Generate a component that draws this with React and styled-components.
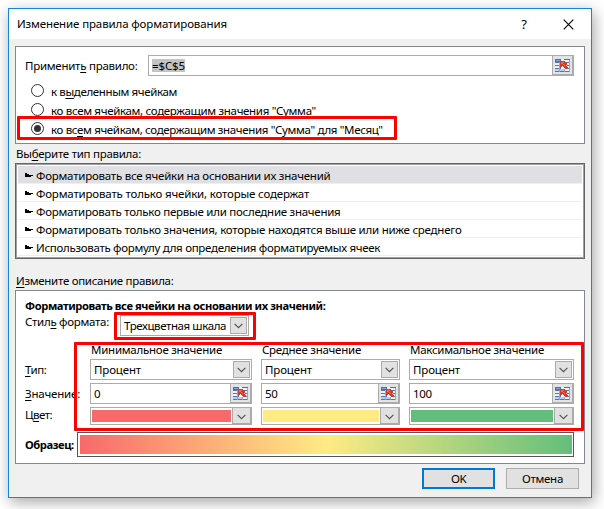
import React from "react";
import styled, { createGlobalStyle } from "styled-components";

const GlobalStyle = createGlobalStyle`
  * { box-sizing: border-box; }
  body {
    margin: 0;
    background: #fff;
    overflow: hidden;
    color: #000;
    font: 11.5px/16px "Noto Sans", sans-serif;
  }
`;

const Page = styled.main`
  width: 604px;
  height: 509px;
  padding: 8px 0 0 8px;
  overflow: hidden;
`;

const Dialog = styled.section`
  position: relative;
  display: flex;
  flex-direction: column;
  width: 584px;
  height: 490px;
  padding: 0 6px;
  border: 1px solid #1883d7;
  background: #f0f0f0;
  box-shadow: 2px 4px 14px rgba(0, 0, 0, 0.36);
`;

const Text = styled.span`
  white-space: pre;
  letter-spacing: ${(p) => p.$ls || -0.27}px;
  font-weight: ${(p) => (p.$bold ? 700 : 400)};
  font-size: ${(p) => (p.$bold ? 11.2 : 11.5)}px;
  u {
    text-underline-offset: 2px;
    text-decoration-thickness: 1px;
    text-decoration-skip-ink: none;
  }
`;

const TitleBar = styled.header`
  display: flex;
  align-items: center;
  height: 30px;
  flex: none;
  margin: 0 -6px;
  padding: 0 17px 0 8px;
  background: #fff;
`;

const HelpMark = styled.span`
  margin-left: auto;
  margin-right: 36px;
  font-size: 13px;
`;

const Panel = styled.div`
  flex: none;
  height: ${(p) => p.$height}px;
  border: 1px solid #828790;
  background: #fff;
`;

const ScopePanel = styled(Panel)`
  margin-top: 7px;
  padding: 8px 10px 0 9px;
`;

const ApplyRow = styled.div`
  display: flex;
  align-items: center;
  height: 21px;
  justify-content: space-between;
`;

const Field = styled.div`
  display: flex;
  align-items: stretch;
  width: ${(p) => p.$width}px;
  height: 21px;
  border: 1px solid #ababab;
  background: #fff;
`;

const FieldValue = styled.div`
  flex: 1;
  display: flex;
  align-items: center;
  padding-left: 3px;
`;

const Selection = styled.span`
  display: flex;
  height: 13px;
  align-items: center;
  background: #c3c3c3;
`;

const PickerButton = styled.button`
  display: flex;
  align-items: center;
  justify-content: center;
  width: 21px;
  padding: 0;
  border: 1px solid #ababab;
  border-top-width: 0;
  border-bottom-width: 1px;
  background: #e3e3e3;
`;

const RadioList = styled.div`
  display: flex;
  flex-direction: column;
  padding: 5px 0 0 6px;
`;

const RadioRow = styled.label`
  display: flex;
  align-items: center;
  gap: 7px;
  height: 19px;
  ${Text} { padding-top: 2px; }
`;

const RadioMark = styled.span`
  display: grid;
  place-items: center;
  width: 13px;
  height: 13px;
  border: 1px solid #333;
  border-radius: 50%;
  background: #fff;
  &::after {
    content: "";
    width: 7px;
    height: 7px;
    border-radius: 50%;
    background: ${(p) => (p.$checked ? "#333" : "transparent")};
  }
`;

const SectionLabel = styled.div`
  display: flex;
  align-items: flex-end;
  flex: none;
  height: ${(p) => p.$height}px;
  padding: 0 0 ${(p) => p.$bottom}px 1px;
`;

const RuleList = styled.div`
  flex: none;
  height: 96px;
  border: 1px solid #646464;
  outline: 1px solid #a0a0a5;
  outline-offset: -2px;
  padding: 2px;
  background: #fff;
`;

const RuleRow = styled.div`
  display: flex;
  align-items: center;
  gap: 3px;
  height: 18px;
  padding: 2px 0 0 7px;
  border-bottom: 1px solid #efefef;
  background: ${(p) => (p.$selected ? "#e0dfe3" : "#fff")};
`;

const RulePanel = styled(Panel)`
  padding: 7px 10px 0 9px;
`;

const RuleTitle = styled.div`
  height: 16px;
`;

const StyleRow = styled.div`
  display: flex;
  align-items: flex-start;
  height: 24px;
`;

const StyleCombo = styled.div`
  margin: 1px 0 0 11px;
`;

const DropButton = styled.button`
  display: flex;
  align-items: center;
  justify-content: center;
  width: 17px;
  margin: 1px;
  padding: 1px 0 0;
  border: 1px solid #ababab;
  background: #e1e1e1;
`;

const ColorButton = styled(DropButton)`
  width: 19px;
  margin: 0;
  padding-top: 3px;
  border-width: 0 1px 1px;
`;

const ScaleGrid = styled.div`
  display: grid;
  grid-template-columns: 56px 162px 139px 165px;
  grid-template-rows: 16px 21px 21px 18px;
  column-gap: 9px;
  row-gap: 3px;
  margin-top: 2px;
  width: 549px;
`;

const GridLabel = styled.div`
  height: 16px;
  margin-top: ${(p) => p.$top}px;
`;

const HeaderCell = styled.div`
  height: 16px;
  padding: 2px 0 0 1px;
`;

const ColorField = styled.div`
  display: flex;
  height: 18px;
  border: 1px solid #ababab;
  background: #fff;
`;

const Swatch = styled.div`
  flex: 1;
  margin: 2px 1px;
  background: ${(p) => p.$color};
`;

const PreviewRow = styled.div`
  display: flex;
  align-items: center;
  justify-content: space-between;
  margin-top: 7px;
  height: 25px;
`;

const PreviewFrame = styled.div`
  width: 497px;
  height: 25px;
  padding: 2px 1px 2px 2px;
  border: 1px solid #555;
`;

const Gradient = styled.div`
  height: 19px;
  background: linear-gradient(90deg, #f8696b, #ffeb84 50%, #63be7b);
`;

const Footer = styled.footer`
  display: flex;
  justify-content: flex-end;
  gap: 11px;
  padding: 4px 6px 0 0;
`;

const Button = styled.button`
  width: 73px;
  height: 21px;
  padding: 0;
  border: ${(p) => (p.$primary ? "2px solid #0078d7" : "1px solid #adadad")};
  background: #e1e1e1;
  color: #000;
  font: inherit;
  line-height: 15px;
`;

const Highlight = styled.div`
  position: absolute;
  left: ${(p) => p.$x}px;
  top: ${(p) => p.$y}px;
  width: ${(p) => p.$w}px;
  height: ${(p) => p.$h}px;
  border: 3px solid #f00;
  border-radius: 1px;
  pointer-events: none;
`;

const CloseIcon = () => (
  <svg width="11" height="11" viewBox="0 0 11 11">
    <path d="M.7.7l9.6 9.6M10.3.7L.7 10.3" stroke="#000" strokeWidth="1.1" fill="none" />
  </svg>
);

const Chevron = () => (
  <svg width="9" height="6" viewBox="0 0 9 6">
    <path d="M.6.8L4.5 4.7 8.4.8" stroke="#555" strokeWidth="1.2" fill="none" />
  </svg>
);

const RuleArrow = () => (
  <svg width="8" height="5" viewBox="0 0 8 5" shapeRendering="crispEdges">
    <path d="M0 0h2v1h2v1h4v1H6v1H0z" fill="#000" />
  </svg>
);

const SheetIcon = () => (
  <svg width="15" height="13" viewBox="0 0 15 13" shapeRendering="crispEdges">
    <path d="M0 0h15v13H0z" fill="#eef3fb" />
    <path d="M0 0h6v3H0zM9 0h6v1H9z" fill="#3e6fc9" />
    <path d="M1 1h4v1H1z" fill="#80a6e8" />
    <path d="M0 3h5v1H0zM0 6h5v1H0zM0 9h6v1H0zM0 12h15v1H0zM11 3h4v1h-4zM12 6h3v1h-3zM12 9h3v1h-3z" fill="#5576b5" />
    <path d="M4 3h1v10H4zM9 10h1v3H9zM14 1h1v12h-1z" fill="#8ba6d8" />
    <path d="M0 10h4v2H0zM5 10h4v2H5z" fill="#bccdec" />
    <path d="M5 2h5v1h1v1h1v2h-1v1h1v1h1v1h-1v1h-2V9H9V8H8V7H7v1H6v1H5z" fill="#d83a20" />
    <path d="M6 3h3v1H8v1h1v1h1v1H9V6H8V5H6z" fill="#f36b48" />
  </svg>
);

const Combo = ({ width, ls, children }) => (
  <Field $width={width}>
    <FieldValue>
      <Text $ls={ls}>{children}</Text>
    </FieldValue>
    <DropButton aria-label="Открыть список">
      <Chevron />
    </DropButton>
  </Field>
);

const RefField = ({ width, children }) => (
  <Field $width={width}>
    <FieldValue>{children}</FieldValue>
    <PickerButton aria-label="Выбрать диапазон">
      <SheetIcon />
    </PickerButton>
  </Field>
);

const rules = [
  ["Форматировать все ячейки на основании их значений", -0.237],
  ["Форматировать только ячейки, которые содержат", -0.18],
  ["Форматировать только первые или последние значения", -0.263],
  ["Форматировать только значения, которые находятся выше или ниже среднего", -0.248],
  ["Использовать формулу для определения форматируемых ячеек", -0.3],
];

const columns = [
  { title: "Минимальное значение", ls: -0.248, width: 162, value: "0", color: "#f8696b" },
  { title: "Среднее значение", ls: -0.25, width: 139, value: "50", color: "#ffeb84" },
  { title: "Максимальное значение", ls: -0.27, width: 165, value: "100", color: "#63be7b" },
];

export default function App() {
  return (
    <Page>
      <GlobalStyle />
      <Dialog>
        <TitleBar>
          <Text $ls={-0.125}>Изменение правила форматирования</Text>
          <HelpMark>?</HelpMark>
          <CloseIcon />
        </TitleBar>

        <ScopePanel $height={98}>
          <ApplyRow>
            <Text $ls={-0.26}>Применит<u>ь</u> правило:</Text>
            <RefField width={426}>
              <Selection><Text $ls={-0.12}>=$C$5</Text></Selection>
            </RefField>
          </ApplyRow>
          <RadioList>
            <RadioRow>
              <RadioMark />
              <Text $ls={-0.37}>к в<u>ы</u>деленным ячейкам</Text>
            </RadioRow>
            <RadioRow>
              <RadioMark />
              <Text $ls={-0.32}>ко всем я<u>ч</u>ейкам, содержащим значения "Сумма"</Text>
            </RadioRow>
            <RadioRow>
              <RadioMark $checked />
              <Text $ls={-0.345}>ко вс<u>е</u>м ячейкам, содержащим значения "Сумма" для "Месяц"</Text>
            </RadioRow>
          </RadioList>
        </ScopePanel>

        <SectionLabel $height={19} $bottom={1}>
          <Text $ls={-0.275}>Вы<u>б</u>ерите тип правила:</Text>
        </SectionLabel>
        <RuleList>
          {rules.map(([label, ls], i) => (
            <RuleRow key={label} $selected={i === 0}>
              <RuleArrow />
              <Text $ls={ls}>{label}</Text>
            </RuleRow>
          ))}
        </RuleList>

        <SectionLabel $height={31} $bottom={1}>
          <Text $ls={-0.288}><u>И</u>змените описание правила:</Text>
        </SectionLabel>
        <RulePanel $height={174}>
          <RuleTitle>
            <Text $bold $ls={-0.42}>Форматировать все ячейки на основании их значений:</Text>
          </RuleTitle>
          <StyleRow>
            <Text $ls={-0.292}>Стил<u>ь</u> формата:</Text>
            <StyleCombo>
              <Combo width={129} ls={-0.406}>Трехцветная шкала</Combo>
            </StyleCombo>
          </StyleRow>
          <ScaleGrid>
            <span />
            {columns.map((c) => (
              <HeaderCell key={c.title}><Text $ls={c.ls}>{c.title}</Text></HeaderCell>
            ))}
            <GridLabel $top={3}><Text $ls={-0.5}><u>Т</u>ип:</Text></GridLabel>
            {columns.map((c) => (
              <Combo key={c.title} width={c.width} ls={-0.146}>Процент</Combo>
            ))}
            <GridLabel $top={3}><Text $ls={-0.2}><u>З</u>начение:</Text></GridLabel>
            {columns.map((c) => (
              <RefField key={c.title} width={c.width}><Text>{c.value}</Text></RefField>
            ))}
            <GridLabel $top={0}><Text $ls={-0.5}>Ц<u>в</u>ет:</Text></GridLabel>
            {columns.map((c) => (
              <ColorField key={c.title}>
                <Swatch $color={c.color} />
                <ColorButton aria-label="Выбрать цвет"><Chevron /></ColorButton>
              </ColorField>
            ))}
          </ScaleGrid>
          <PreviewRow>
            <Text $bold $ls={-0.42}>Образец:</Text>
            <PreviewFrame><Gradient /></PreviewFrame>
          </PreviewRow>
        </RulePanel>

        <Footer>
          <Button $primary><Text $ls={-0.5}>OK</Text></Button>
          <Button><Text $ls={-0.29}>Отмена</Text></Button>
        </Footer>

        <Highlight $x={8} $y={107} $w={380} $h={24} />
        <Highlight $x={105} $y={303} $w={142} $h={28} />
        <Highlight $x={65} $y={333} $w={510} $h={89} />
      </Dialog>
    </Page>
  );
}
